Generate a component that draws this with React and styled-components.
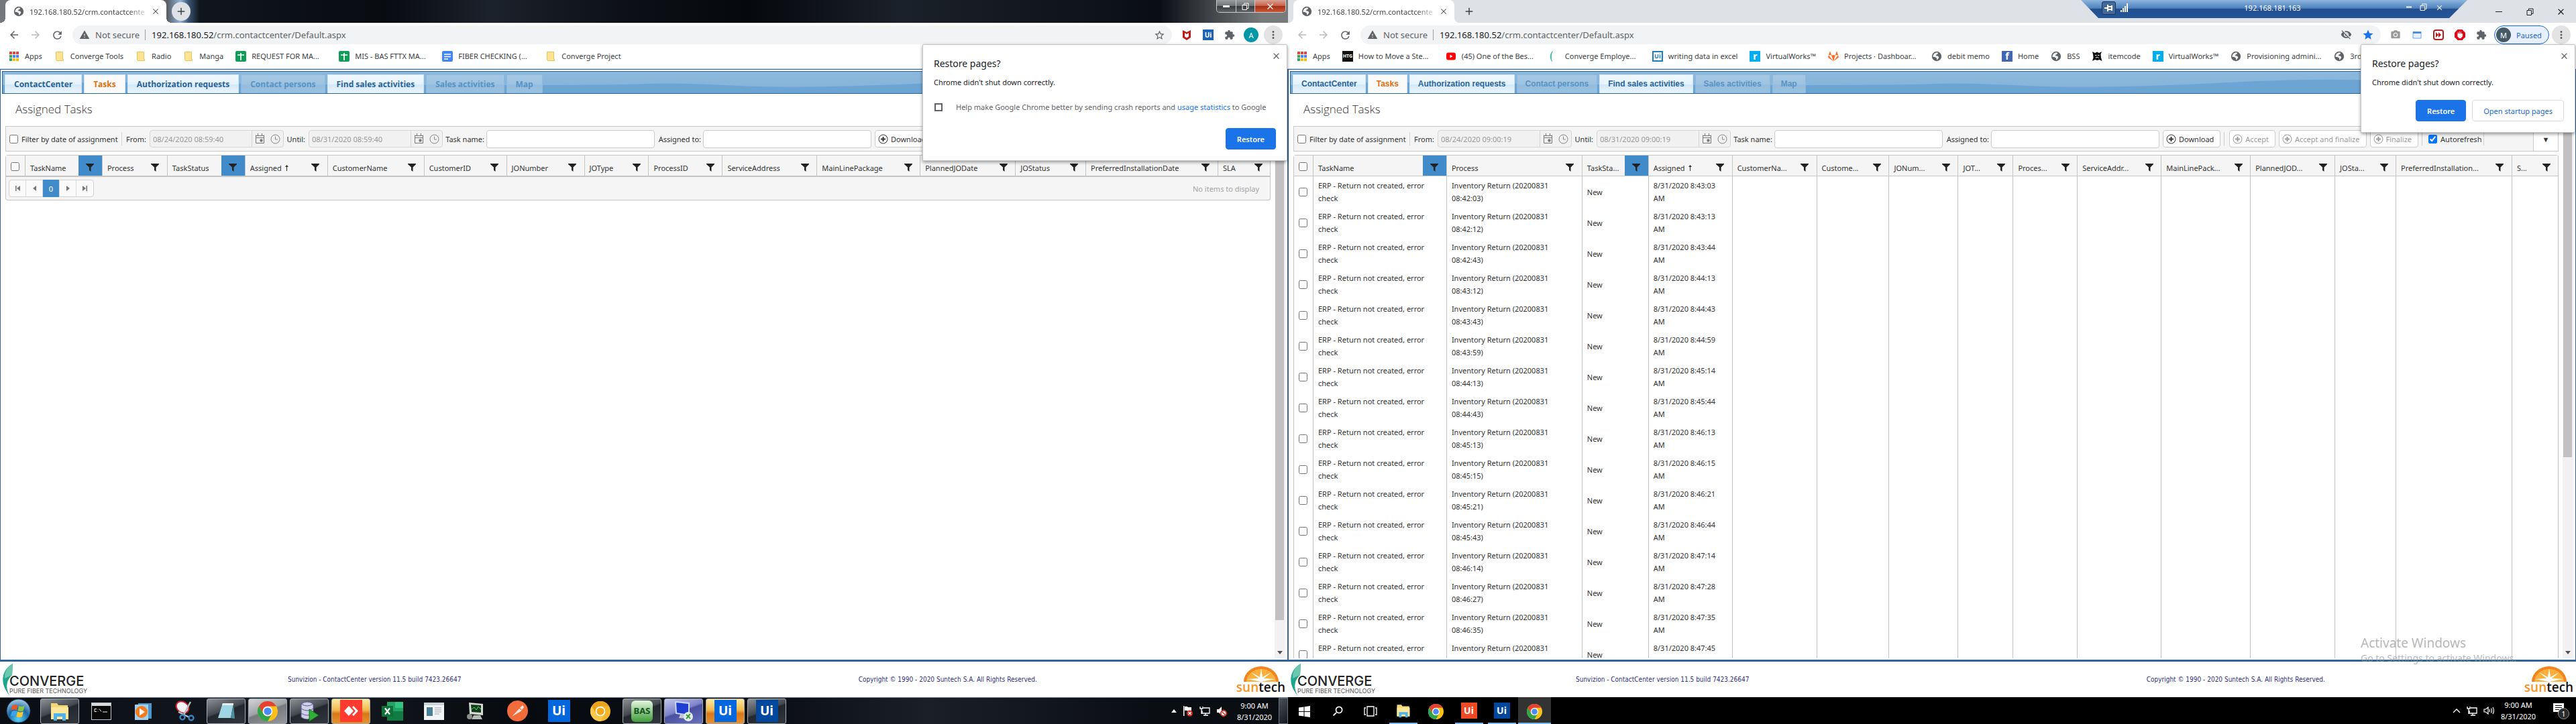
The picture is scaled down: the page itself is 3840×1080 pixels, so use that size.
import React, { useId } from 'react';
import styled, { createGlobalStyle, css } from 'styled-components';
import {
  MdArrowBack, MdArrowForward, MdRefresh, MdWarning, MdStarBorder, MdStar, MdExtension,
  MdMoreVert, MdVisibilityOff, MdClose, MdPhotoCamera, MdAdd, MdSearch,
} from 'react-icons/md';
import { FaGitlab } from 'react-icons/fa';

const UI = `'Noto Sans', 'Open Sans', sans-serif`;

const Global = createGlobalStyle`
  * { box-sizing: border-box; }
  html, body { margin: 0; background: #fff; }
  body { font-family: ${UI}; font-size: 11px; color: #333; }
  button, input { font: inherit; color: inherit; }
  button { border: 0; background: none; padding: 0; }
  input[type='checkbox'] { width: 13px; height: 13px; margin: 0; flex: none; }
  svg { display: block; flex: none; }
`;

/* ---------- desktop ---------- */

const Desktop = styled.div`
  display: flex;
  height: 100vh;
  overflow: hidden;
`;

const Screen = styled.section`
  position: relative;
  flex: 1 1 0;
  min-width: 0;
  display: flex;
  flex-direction: column;
`;

/* ---------- browser chrome ---------- */

const TabStrip = styled.div`
  display: flex;
  align-items: center;
  height: 34px;
  padding-left: 8px;
  background: ${(p) =>
    p.$glass
      ? 'linear-gradient(90deg, #75787c 0, #5c6066 13%, #8fb3dc 14%, #3d5878 14.6%, #10161d 15.5%, #080b10 30%, #1c222c 38%, #0d1117 48%, #05080c 58%, #1b212a 70%, #0a0e14 90%, #777b7c 98%)'
      : '#dee1e6'};
`;

const BrowserTab = styled.div`
  position: relative;
  display: flex;
  align-items: center;
  gap: 8px;
  width: 240px;
  height: 34px;
  padding: 0 8px 0 12px;
  border-radius: 8px 8px 0 0;
  background: #fff;
  color: #45494d;
  &::before, &::after {
    content: '';
    position: absolute;
    bottom: 0;
    width: 8px;
    height: 8px;
  }
  &::before { left: -8px; background: radial-gradient(circle at 0 0, transparent 8px, #fff 8px); }
  &::after { right: -8px; background: radial-gradient(circle at 100% 0, transparent 8px, #fff 8px); }
`;

const TabTitle = styled.span`
  flex: 1;
  white-space: nowrap;
  mask-image: linear-gradient(90deg, #000 86%, rgba(0, 0, 0, 0.2));
`;

const IconButton = styled.button`
  display: flex;
  align-items: center;
  justify-content: center;
  flex: none;
  width: ${(p) => p.$size || 16}px;
  height: ${(p) => p.$size || 16}px;
  border-radius: 50%;
  color: ${(p) => p.$color || '#5f6368'};
  background: ${(p) => p.$bg || 'none'};
`;

const NewTab = styled(IconButton)`
  margin-left: 8px;
`;

const AeroControls = styled.div`
  align-self: flex-start;
  display: flex;
  height: 19px;
  margin: 0 3px 0 auto;
  border: 1px solid #c8cacc;
  border-top: 0;
  border-radius: 0 0 5px 5px;
  overflow: hidden;
`;

const AeroButton = styled.button`
  display: flex;
  align-items: center;
  justify-content: center;
  width: ${(p) => (p.$close ? 46 : 28)}px;
  border-left: ${(p) => (p.$first ? 0 : 1)}px solid #c8cacc;
  background: ${(p) =>
    p.$close
      ? 'linear-gradient(#d9a293, #c4604a 48%, #a82d12 52%, #c9583a)'
      : 'linear-gradient(#9a9c9e, #707375 48%, #393c3f 52%, #606365)'};
`;

const MetroControls = styled.div`
  display: flex;
  margin-left: auto;
`;

const MetroButton = styled.button`
  display: flex;
  align-items: center;
  justify-content: center;
  width: 46px;
  height: 28px;
`;

const RemoteBar = styled.div`
  position: absolute;
  top: 0;
  left: 1182px;
  width: 576px;
  height: 27px;
  display: flex;
  align-items: center;
  padding: 0 31px 4px;
  color: #fff;
  background: linear-gradient(#8db4de, #4d81bd 46%, #234f8f 48%, #24569a);
  clip-path: polygon(0 0, 100% 0, 549px 100%, 26px 100%);
`;

const RemotePin = styled.button`
  display: flex;
  align-items: center;
  justify-content: center;
  width: 21px;
  height: 20px;
  border: 1px solid #1a3459;
  border-radius: 3px;
  background: #43699a;
`;

const RemoteTitle = styled.span`
  flex: 1;
  padding-left: 14px;
  text-align: center;
`;

const RemoteButtons = styled.div`
  display: flex;
  gap: 12px;
  padding-right: 4px;
`;

const AddressRow = styled.div`
  display: flex;
  align-items: center;
  height: 36px;
  padding: 0 8px 0 12px;
`;

const NavButtons = styled.div`
  display: flex;
  gap: 14px;
  width: 96px;
`;

const Omnibox = styled.div`
  flex: 1;
  display: flex;
  align-items: center;
  height: 28px;
  padding: 0 10px;
  border-radius: 14px;
  background: #f1f3f4;
  color: #5f6368;
  font-size: 13px;
`;

const NotSecure = styled.span`
  display: flex;
  align-items: center;
  gap: 8px;
  padding-right: 8px;
  margin-right: 9px;
  line-height: 16px;
  border-right: 1px solid #9aa0a6;
`;

const Url = styled.span`
  flex: 1;
  white-space: nowrap;
  b { font-weight: 400; color: #202124; }
`;

const OmniIcons = styled.span`
  display: flex;
  gap: 15px;
`;

const Extensions = styled.div`
  display: flex;
  align-items: center;
  gap: 16px;
  padding: 0 6px 0 14px;
`;

const Avatar = styled.span`
  display: flex;
  align-items: center;
  justify-content: center;
  width: 22px;
  height: 22px;
  margin: 0 2px 0 -3px;
  border-radius: 50%;
  color: #fff;
  background: ${(p) => p.$bg};
`;

const ProfilePill = styled.button`
  display: flex;
  align-items: center;
  gap: 6px;
  width: 82px;
  height: 28px;
  margin: 0 -2px 0 -5px;
  padding-left: 5px;
  border: 1px solid #1967d2;
  border-radius: 14px;
  background: #e8f0fe;
  color: #1967d2;
`;

const Bookmarks = styled.nav`
  display: flex;
  align-items: center;
  gap: 18px;
  height: 33px;
  padding: 0 0 5px 13px;
  overflow: hidden;
  border-bottom: 1px solid #d4d6d9;
`;

const Bookmark = styled.a`
  display: flex;
  align-items: center;
  gap: 8px;
  flex: none;
  color: #3c4043;
  text-decoration: none;
  white-space: nowrap;
  span { width: ${(p) => (p.$long ? '112px' : 'auto')}; }
`;

/* ---------- restore bubble ---------- */

const Bubble = styled.aside`
  position: absolute;
  top: 66px;
  right: 1px;
  width: ${(p) => p.$width}px;
  padding: 19px 16px 16px 16px;
  background: #fff;
  border: 1px solid #c4c6c8;
  border-radius: 2px;
  box-shadow: 0 2px 5px rgba(0, 0, 0, 0.4);
  color: #202124;
  z-index: 2;
`;

const BubbleClose = styled(IconButton)`
  position: absolute;
  top: 8px;
  right: 8px;
`;

const BubbleTitle = styled.h2`
  margin: 0 0 9px;
  font-size: 14px;
  line-height: 18px;
  font-weight: 400;
`;

const BubbleText = styled.p`
  margin: 0;
  line-height: 20px;
`;

const ReportLabel = styled.label`
  display: flex;
  align-items: center;
  gap: 20px;
  margin-top: 17px;
  line-height: 20px;
  white-space: nowrap;
  color: #5f6368;
  a { color: #1a73e8; text-decoration: none; }
  input[type='checkbox'] {
    appearance: none;
    width: 12px;
    height: 12px;
    margin-left: 1px;
    border: 2px solid #5f6368;
  }
`;

const BubbleButtons = styled.div`
  display: flex;
  justify-content: flex-end;
  gap: 9px;
  margin-top: ${(p) => (p.$tight ? 16 : 21)}px;
`;

const BubbleButton = styled.button`
  height: 32px;
  padding: 0 16px;
  border-radius: 4px;
  border: 1px solid ${(p) => (p.$primary ? '#1a73e8' : '#dadce0')};
  background: ${(p) => (p.$primary ? '#1a73e8' : '#fff')};
  color: ${(p) => (p.$primary ? '#fff' : '#1967d2')};
  font-weight: ${(p) => (p.$primary ? 600 : 400)};
`;

/* ---------- web application ---------- */

const Frame = styled.main`
  flex: 1;
  min-height: 0;
  display: flex;
  flex-direction: column;
  padding: 2px;
  border: 1px solid #2d6699;
  border-bottom-width: 3px;
`;

const AppTabs = styled.nav`
  position: relative;
  display: flex;
  align-items: flex-end;
  gap: 3px;
  height: 34px;
  padding: 4px 3px 0;
  border: 1px solid #2d6699;
  border-right: 0;
  overflow: hidden;
  background: linear-gradient(#8cb8dc, #83b3da);
  flex: none;
`;

const Wave = styled.svg`
  position: absolute;
  inset: 0;
  width: 100%;
  height: 100%;
`;

const tabStates = {
  normal: css`
    background: linear-gradient(#f0f8fe, #e6f3fd 50%, #d2e8fb 52%, #eaf5fe);
    color: #2a6496;
  `,
  active: css`
    background: #fafafa;
    color: #e0700d;
  `,
  disabled: css`
    background: linear-gradient(#a6c8e4, #9dc3e2 50%, #93bcde 52%, #9ac1e1);
    color: #5a93c1;
  `,
};

const AppTab = styled.button`
  position: relative;
  height: 28px;
  padding: ${(p) => (p.$arial ? '0 12px 2px' : '0 13px')};
  border: 1px solid ${(p) => (p.$state === 'disabled' ? '#8fb9dc' : '#cfe4f5')};
  border-bottom: 0;
  font-weight: 700;
  font-size: 12px;
  font-family: ${(p) => (p.$arial ? `'Liberation Sans', Arial, sans-serif` : `'Open Sans', sans-serif`)};
  white-space: nowrap;
  ${(p) => tabStates[p.$state]}
`;

const Body = styled.div`
  flex: 1;
  min-height: 0;
  display: flex;
  gap: 6px;
  padding: 0 1px 0 5px;
  overflow: hidden;
`;

const Main = styled.div`
  flex: 1;
  min-width: 0;
  overflow: hidden;
`;

const Title = styled.h1`
  margin: 0;
  padding-left: 15px;
  height: 48px;
  font-family: 'Open Sans', sans-serif;
  font-size: 17px;
  line-height: 46px;
  font-weight: 300;
`;

const FilterBar = styled.form`
  display: flex;
  align-items: center;
  height: 38px;
  padding-left: 5px;
  margin-bottom: 5px;
  border: 1px solid #c9c9c9;
  background: #f5f5f5;
  white-space: nowrap;
`;

const CheckLabel = styled.label`
  display: flex;
  align-items: center;
  gap: 5px;
  width: ${(p) => p.$width}px;
  height: 20px;
  border-right: 1px solid #d4d4d4;
`;

const FieldLabel = styled.label`
  width: ${(p) => p.$width}px;
  text-align: right;
  margin-right: ${(p) => p.$gap || 5}px;
`;

const DateBox = styled.div`
  display: flex;
  align-items: center;
  width: 200px;
  height: 26px;
  border: 1px solid #d6d6d6;
  border-radius: 4px;
  background: #f1f1f1;
`;

const DateInput = styled.input`
  width: 152px;
  height: 24px;
  padding: 0 4px;
  border: 0;
  border-right: 1px solid #d6d6d6;
  background: none;
  color: #9a9a9a;
`;

const PickerButton = styled.button`
  display: flex;
  justify-content: center;
  width: 23px;
`;

const TextInput = styled.input`
  width: 251px;
  height: 27px;
  padding: 0 5px;
  border: 1px solid #ccc;
  border-radius: 4px;
  background: #fff;
`;

const ToolButton = styled.button`
  display: flex;
  align-items: center;
  gap: 4px;
  height: 26px;
  margin-left: 5px;
  padding: 0 9px 0 4px;
  border: 1px solid #ccc;
  border-radius: 4px;
  background: #fff;
  color: #333;
  &:disabled { color: #9b9b9b; }
`;

const Divider = styled.span`
  width: 1px;
  height: 20px;
  margin: 0 2px 0 5px;
  background: #ccc;
`;

const MoreButton = styled.button`
  width: 37px;
  height: 36px;
  margin-left: auto;
  border-left: 1px solid #ccc;
  background: #fff;
  display: flex;
  align-items: center;
  justify-content: center;
`;

const Grid = styled.table`
  width: 100%;
  table-layout: fixed;
  border-spacing: 0;
  border-left: 1px solid #c5c5c5;
  border-top: 1px solid #c5c5c5;
  border-radius: 4px 4px 0 0;
  line-height: 19px;
`;

const Col = styled.col`
  width: ${(p) => (p.$share / 1886) * 100}%;
`;

const HeadCell = styled.th`
  padding: 0;
  border-right: 1px solid #c5c5c5;
  border-bottom: ${(p) => (p.$thick ? 2 : 1)}px solid #c5c5c5;
  background: #f5f5f5;
  font-weight: 400;
  text-align: left;
`;

const HeadInner = styled.div`
  display: flex;
  align-items: center;
  height: 30px;
  padding-left: 7px;
  white-space: nowrap;
  overflow: hidden;
`;

const HeadLabel = styled.span`
  flex: 1;
  padding-top: 6px;
`;

const FilterButton = styled.button`
  display: flex;
  align-items: center;
  justify-content: center;
  width: 35px;
  height: 30px;
  padding-top: 6px;
  background: ${(p) => (p.$on ? '#428bca' : 'none')};
`;

const Cell = styled.td`
  height: 46px;
  padding: 0 8px 0 7px;
  border-right: 1px solid #c5c5c5;
  vertical-align: middle;
  white-space: nowrap;
`;

const CheckHold = styled.label`
  display: flex;
  padding: ${(p) => (p.$head ? '3px 0 0 7px' : '0')};
`;

const Pager = styled.div`
  display: flex;
  align-items: center;
  height: 35px;
  padding: 0 16px 0 4px;
  border: 1px solid #c5c5c5;
  border-top: 0;
  border-radius: 0 0 4px 4px;
  background: #f5f5f5;
  color: #a3a3a3;
`;

const PagerGroup = styled.div`
  display: flex;
  height: 26px;
  margin-right: auto;
  border: 1px solid #d2d2d2;
  border-radius: 4px;
  background: #fafafa;
`;

const PagerButton = styled.button`
  display: flex;
  align-items: center;
  justify-content: center;
  width: 25px;
  margin: ${(p) => (p.$current ? '-1px 0' : '0')};
  border-right: ${(p) => (p.$last ? 0 : 1)}px solid #dcdcdc;
  background: ${(p) => (p.$current ? '#428bca' : 'none')};
  color: ${(p) => (p.$current ? '#fff' : '#888')};
`;

const Scrollbar = styled.div`
  display: flex;
  flex-direction: column;
  width: 16px;
  padding: 17px 1px;
  background: #f1f1f1;
`;

const Thumb = styled.div`
  flex: 0 0 ${(p) => p.$share}%;
  margin: 0 1px 0 0;
  background: #c1c1c1;
`;

const ScrollArrow = styled.span`
  margin: auto auto -11px;
  border: 4px solid transparent;
  border-top: 5px solid #505050;
  border-bottom: 0;
`;

const Footer = styled.footer`
  display: flex;
  align-items: center;
  height: 53px;
  padding-left: 4px;
  font: 10px 'DejaVu Sans Condensed', 'DejaVu Sans', sans-serif;
  color: #2f2f7d;
  background: #fff;
`;

const FooterText = styled.span`
  flex: 1;
  text-align: center;
`;

const ConvergeLogo = styled.div`
  display: flex;
  width: 127px;
  height: 48px;
`;

const ConvergeWords = styled.div`
  margin-left: -7px;
  padding-top: 16px;
  font-family: Inter, sans-serif;
  white-space: nowrap;
  color: #222;
`;

const ConvergeName = styled.div`
  font-size: 20px;
  line-height: 20px;
  font-weight: 500;
`;

const ConvergeTag = styled.div`
  font-size: 9px;
  line-height: 10px;
  color: #555;
`;

const SuntechLogo = styled.div`
  display: flex;
  flex-direction: column;
  align-items: center;
  width: 80px;
  padding-right: 1px;
`;

const SuntechName = styled.div`
  font: 600 19px/17px 'Open Sans', sans-serif;
  color: #111;
  span { color: #f7941d; }
`;

const Watermark = styled.div`
  position: absolute;
  left: 1599px;
  bottom: 88px;
  color: rgba(150, 150, 150, 0.7);
  font-size: 14px;
  line-height: 20px;
  white-space: nowrap;
  strong { display: block; font-weight: 400; font-size: 19px; line-height: 25px; }
`;

/* ---------- taskbars ---------- */

const AeroBar = styled.div`
  display: flex;
  align-items: center;
  height: 40px;
  padding-left: 9px;
  border-top: 1px solid #6e7a88;
  background: linear-gradient(90deg, #0a0e13, #151a21 25%, #070a0e 40%, #0b0f14 60%, #1a1f28 72%, #0a0d12 90%);
`;

const AeroApps = styled.div`
  display: flex;
  gap: 4px;
  margin-left: 14px;
`;

const aeroLook = {
  none: 'transparent',
  open: 'linear-gradient(160deg, #8d9196, #43484e 45%, #23282e 50%, #32373d)',
  light: 'linear-gradient(160deg, #d2d4d6, #a0a3a6 45%, #77797c 50%, #96989b)',
  alert: 'linear-gradient(#fbe9a0, #f2b94f 45%, #d9761a 60%, #e5922e)',
  blue: 'linear-gradient(160deg, #c4c8ee, #7c82c8 45%, #4a50a0 50%, #6a70c0)',
};

const AeroApp = styled.button`
  display: flex;
  align-items: center;
  justify-content: center;
  width: 58px;
  height: 38px;
  border: 1px solid ${(p) => (p.$look === 'none' ? 'transparent' : '#a6abb0')};
  border-radius: 3px;
  background: ${(p) => aeroLook[p.$look]};
`;

const StartButton = styled.button`
  display: flex;
`;

const Tray = styled.div`
  display: flex;
  align-items: center;
  gap: 9px;
  margin-left: auto;
  color: #fff;
`;

const Clock = styled.div`
  width: 60px;
  margin: 0 ${(p) => p.$after}px 0 ${(p) => p.$before}px;
  text-align: center;
  line-height: 17px;
`;

const ShowDesktop = styled.button`
  width: 14px;
  height: 39px;
  border: 1px solid #6d737a;
  background: linear-gradient(135deg, #4a5057, #15191e);
`;

const MetroBar = styled.div`
  display: flex;
  align-items: center;
  height: 40px;
  background: #000;
`;

const MetroApp = styled.button`
  display: flex;
  align-items: center;
  justify-content: center;
  width: 49px;
  height: 40px;
  padding-top: 2px;
  background: ${(p) => (p.$active ? '#333' : 'none')};
  box-shadow: ${(p) => (p.$active ? 'inset 0 -2px #76b9ed' : 'none')};
  border-bottom: ${(p) => (p.$open ? 2 : 0)}px solid #76b9ed;
  border-image: ${(p) =>
    p.$open ? 'linear-gradient(90deg, #000 5px, #76b9ed 5px, #76b9ed 45px, #000 45px) 1' : 'none'};
`;

/* ---------- drawings ---------- */

const Tile = styled.i`
  display: flex;
  align-items: center;
  justify-content: center;
  flex: none;
  width: ${(p) => p.$w}px;
  height: ${(p) => p.$h}px;
  border: ${(p) => (p.$border ? `2px solid ${p.$border}` : 0)};
  border-radius: ${(p) => p.$r}px;
  background: ${(p) => p.$bg};
  color: ${(p) => p.$fill};
  font-style: normal;
  font-weight: 700;
  font-size: ${(p) => p.$size}px;
  line-height: 1;
`;

const Square = ({ bg, children, w = 16, h = 16, size = 9, fill = '#fff', r = 0, border }) => (
  <Tile $bg={bg} $w={w} $h={h} $size={size} $fill={fill} $r={r} $border={border}>{children}</Tile>
);

const Globe = () => (
  <svg width="16" height="16" viewBox="0 0 16 16">
    <circle cx="8" cy="8" r="7.2" fill="#5f6368" />
    <path d="M4.500 3.800 7.800 2.200l2.500.6-1 2-2 1-.3 1.400 2.600.3 1.700 1.600-.6 2-2.300 2.700-.6-3.200-2.600-1.500-2.700-.2.2-2.400Z" fill="#fff" opacity=".92" />
  </svg>
);

const AppsIcon = () => {
  const colors = ['#ea4335', '#ea4335', '#ea4335', '#34a853', '#4285f4', '#4285f4', '#34a853', '#fbbc05', '#fbbc05'];
  return (
    <svg width="16" height="16" viewBox="0 0 16 16">
      {colors.map((c, i) => (
        <rect key={i} x={1 + (i % 3) * 5} y={1 + Math.floor(i / 3) * 5} width="4" height="4" fill={c} />
      ))}
    </svg>
  );
};

const Folder = () => (
  <svg width="16" height="16" viewBox="0 0 16 16">
    <path d="M2.500 1.500h10v11h1v2H4l-1.500-1z" fill="#ffe391" stroke="#e8c45c" />
  </svg>
);

const Sheet = () => (
  <svg width="16" height="16" viewBox="0 0 16 16">
    <rect width="16" height="16" rx="2" fill="#0f9d58" />
    <path d="M3 6h10M8 3v11" stroke="#fff" strokeWidth="1.7" />
  </svg>
);

const Doc = () => (
  <svg width="16" height="16" viewBox="0 0 16 16">
    <rect width="16" height="16" rx="2" fill="#4285f4" />
    <path d="M3 5h10M3 8.500h10M3 12h6" stroke="#fff" strokeWidth="1.600" />
  </svg>
);

const YouTube = () => (
  <svg width="16" height="16" viewBox="0 0 16 16">
    <rect x="1" y="2.500" width="14" height="11" rx="3" fill="#f00" />
    <path d="m6.500 5.500 4 2.500-4 2.500z" fill="#fff" />
  </svg>
);

const Crescent = () => (
  <svg width="16" height="16" viewBox="0 0 16 16">
    <path d="M5.500.5C1 5 1.500 11 4.500 15.500 3 10 3 5 5.500.5Z" fill="#28b796" stroke="#28b796" strokeWidth=".6" />
  </svg>
);

const Ninja = () => (
  <svg width="16" height="16" viewBox="0 0 16 16">
    <path d="M1 1l4 2 3-1.500L11 3l4-2-1.500 4 .5 5 1.500 5-4-2-3 1-3.500-1L1 15l1.500-5L2 5Z" fill="#111" />
    <path d="M5 6.500h2.500M9 6.500h2.500M6 10.500c1.500-1.500 3-1.500 4.500 0" stroke="#fff" fill="none" />
  </svg>
);

const ChromeLogo = ({ size = 24, canary }) => {
  const [r, g, y, b] = canary ? ['#e9a21b', '#f7c948', '#f3b62c', '#f0a818'] : ['#e34133', '#2da44e', '#fbc116', '#4a8af4'];
  return (
    <svg width={size} height={size} viewBox="0 0 24 24">
      <circle cx="12" cy="12" r="12" fill={y} />
      <path d="M1.600 6A12 12 0 0 1 22.400 6H12a6 6 0 0 0-5.200 9z" fill={r} />
      <path d="M1.600 6A12 12 0 0 0 12 24l5.200-9a6 6 0 0 1-10.400 0z" fill={g} />
      <circle cx="12" cy="12" r="5.800" fill="#fff" />
      <circle cx="12" cy="12" r="4.500" fill={b} />
    </svg>
  );
};

const FilterIcon = () => (
  <svg width="12" height="12" viewBox="0 0 12 12">
    <path d="M0 0h12v1L7.500 5.500V12L5 10V5.500L0 1Z" fill="#222" />
  </svg>
);

const SortArrow = styled.svg`
  display: inline-block;
  margin-left: 5px;
  vertical-align: 0;
`;

const Calendar = () => (
  <svg width="15" height="16" viewBox="0 0 15 16" fill="none" stroke="#777">
    <path d="M1 3.500h13M1 6.500h13M1.500 2.500v12h12v-12M4.500 0v4M10.500 0v4" />
    <path d="M8 9h3v3H8z" fill="#777" />
  </svg>
);

const ClockIcon = () => (
  <svg width="15" height="15" viewBox="0 0 15 15" fill="none" stroke="#888">
    <circle cx="7.500" cy="7.500" r="6.500" />
    <path d="M7.500 3.500v4.500h3.500" />
  </svg>
);

const PlusCircle = () => (
  <svg width="15" height="15" viewBox="0 0 15 15" fill="none" stroke="currentColor">
    <circle cx="7.500" cy="7.500" r="6.500" />
    <path d="M7.500 4v7M4 7.500h7" strokeWidth="2" />
  </svg>
);

const PagerIcon = ({ flip, bar }) => (
  <svg width="9" height="8" viewBox="0 0 9 8" transform={flip ? 'scale(-1 1)' : undefined}>
    <path d={bar ? 'M8 0v8L3 4ZM1 0h1.500v8H1Z' : 'M7 0v8L2 4Z'} fill="#777" />
  </svg>
);

const Puzzle = () => <MdExtension size={16} color="#5f6368" />;

const Shield = () => (
  <svg width="16" height="16" viewBox="0 0 16 16">
    <path d="M2 1l6 3 6-3v11l-6 4-6-4ZM5 5v5.500l3 2 3-2V5L8 7Z" fill="#c01818" fillRule="evenodd" />
  </svg>
);

const WindowExt = () => (
  <svg width="16" height="16" viewBox="0 0 16 16">
    <path d="M2 3.500h12v9.500H2z" fill="#e8f1fd" stroke="#6ba4ee" />
    <path d="M2 3h12v3H2z" fill="#4a90e2" />
  </svg>
);

const FastForward = () => (
  <svg width="16" height="16" viewBox="0 0 16 16">
    <rect x="1" y="1" width="14" height="14" rx="3" fill="#fff" stroke="#b71c1c" strokeWidth="2" />
    <path d="m4 4 4 4-4 4zM8 4l4 4-4 4z" fill="#c01818" />
  </svg>
);

const AdBlock = () => (
  <svg width="16" height="16" viewBox="0 0 17 17">
    <path d="M5 0h7l5 5v7l-5 5H5l-5-5V5z" fill="#e30613" />
    <path d="M5.500 7V4.500M7.700 7V3M9.900 7V3.500M5.200 7h7v3.500L10 13.500H7.500L5.200 11Z" fill="#fff" stroke="#fff" />
  </svg>
);

const RestoreGlyph = ({ color = '#222' }) => (
  <svg width="11" height="11" viewBox="0 0 11 11" fill="none" stroke={color}>
    <path d="M1 3.500h6.500v7H1zM3.500 3V1H10v7.500H8" />
  </svg>
);

const Dash = ({ color = '#222', w = 10, t = 1 }) => (
  <svg width={w} height="10" viewBox={`0 0 ${w} 10`}>
    <path d={`M0 5.500h${w}`} stroke={color} strokeWidth={t} />
  </svg>
);

const Orb = () => (
  <svg width="37" height="37" viewBox="0 0 37 37">
    <defs>
      <radialGradient id="orb" cx="50%" cy="85%" r="80%">
        <stop offset="0" stopColor="#5cd0f5" /><stop offset=".55" stopColor="#1b68a8" /><stop offset="1" stopColor="#9cc3de" />
      </radialGradient>
    </defs>
    <circle cx="18.500" cy="18.500" r="17.500" fill="url(#orb)" stroke="#1a3b5c" />
    <path d="M9 11q4-3 8.500-.8l-1.600 7.300q-4-2-8.200.4z" fill="#e8562a" />
    <path d="M19 11q4 2 8.600-.3L26 18q-4.500 2.200-8.600 0z" fill="#8cc63f" />
    <path d="M8.500 19.500q4-2.500 8.200-.4L15 26.500q-4-2-8.200.4z" fill="#3ba5e8" />
    <path d="M17 19.600q4 2.200 8.700 0L24 27q-4.500 2.200-8.600 0z" fill="#fcc92c" />
  </svg>
);

const Explorer = ({ size = 30 }) => (
  <svg width={size} height={size} viewBox="0 0 30 30">
    <path d="M2 3h9l2 3h14v20H2z" fill="#f3d677" />
    <path d="M2 9h26v18H2z" fill="#fbe69c" />
    <path d="M6 29V18h18v11h-5v-6h-8v6z" fill="#4fb3e8" />
  </svg>
);

const Cmd = () => (
  <svg width="30" height="26" viewBox="0 0 30 26">
    <rect x=".5" y=".5" width="29" height="25" fill="#0a0a0a" stroke="#bfc3c7" />
    <path d="M1 1h28v4H1z" fill="#d8dbde" />
    <path d="M8 9.500H5v4h3M10 10v.5M10 13v.5M12 9.500l3 4M17 14h7" stroke="#eee" fill="none" />
  </svg>
);

const Player = () => (
  <svg width="28" height="28" viewBox="0 0 28 28">
    <path d="M7 2h20v23H7z" fill="#4d94c8" /><path d="M2 4h20v23H2z" fill="#9ed0ef" />
    <circle cx="12" cy="15" r="9" fill="#f37b1d" /><path d="M9 9.500 17 15l-8 5.500z" fill="#fff" />
  </svg>
);

const Snip = () => (
  <svg width="30" height="32" viewBox="0 0 30 32">
    <ellipse cx="12" cy="10" rx="10" ry="8" fill="#f5f5f5" stroke="#c9202b" strokeWidth="2" transform="rotate(35 12 10)" />
    <path d="M24 2 14 21M6 17l16 8" stroke="#b9bec4" strokeWidth="2.500" />
    <circle cx="12" cy="25" r="3.500" fill="none" stroke="#3c7fc0" strokeWidth="2.500" />
    <circle cx="25" cy="26" r="3.500" fill="none" stroke="#3c7fc0" strokeWidth="2.500" />
  </svg>
);

const Notepad = () => (
  <svg width="30" height="30" viewBox="0 0 30 30">
    <path d="M10 3h16l-4 22H3z" fill="#9fd6e4" /><path d="M10 3h16v3H9z" fill="#e7eef1" /><path d="m22 25 4-19 2 20z" fill="#4f8fa4" />
  </svg>
);

const Database = () => (
  <svg width="30" height="32" viewBox="0 0 30 32">
    <path d="M3 5q9-6 18 0v20q-9 6-18 0z" fill="#cfcfe8" stroke="#5a5a92" />
    <path d="M3 5q9 6 18 0M3 12q9 6 18 0M3 19q9 6 18 0" fill="none" stroke="#5a5a92" />
    <path d="m15 13 14 9-14 9z" fill="#2eb135" stroke="#176b1c" />
  </svg>
);

const AnyDesk = () => (
  <svg width="33" height="33" viewBox="0 0 33 33">
    <path d="M0 0h33v33H0z" fill="#ff3b30" /><path d="m13 9 7 7.500-7 7.500-7-7.500zM20 9l7 7.500-7 7.500-2-2 5-5.500-5-5.500z" fill="#fff" />
  </svg>
);

const Excel = () => (
  <svg width="32" height="28" viewBox="0 0 32 28">
    <path d="M8 0h24v28H8z" fill="#21a366" /><path d="M20 0h12v9H20z" fill="#33c481" /><path d="M8 14h24v14H8z" fill="#107c41" />
    <path d="M0 6h17v16H0z" fill="#0f7038" /><path d="m5 9.500 7 9M12 9.500l-7 9" stroke="#fff" strokeWidth="2.200" />
  </svg>
);

const FormWindow = () => (
  <svg width="30" height="26" viewBox="0 0 30 26">
    <path d="M0 0h30v26H0z" fill="#f2f4f5" /><path d="M0 0h30v4H0z" fill="#c9d3da" /><path d="M4 7h9v13H4z" fill="#4a7f98" />
    <path d="M16 8h10M16 11h10M16 14h10M16 17h7" stroke="#9aa7ae" />
  </svg>
);

const Monitor = () => (
  <svg width="30" height="30" viewBox="0 0 30 30">
    <path d="M5 2 26 4v17L6 19z" fill="#d5d9d2" /><path d="M8 5l15 1v11L9 16z" fill="#123b1b" />
    <path d="M9 12l4-3 3 4 3-5 4 4" stroke="#49d85f" fill="none" /><path d="M12 21h10l3 6H9z" fill="#b7bbb5" /><circle cx="6" cy="23" r="4" fill="#8b918a" />
  </svg>
);

const Postman = () => (
  <svg width="33" height="33" viewBox="0 0 33 33">
    <circle cx="16.500" cy="16.500" r="15.500" fill="#f26b3a" /><path d="m8 25 11-12 4 3zM20 12l4-4 2 3-3 4z" fill="#fff" opacity=".85" />
  </svg>
);

const RemoteDesktop = () => (
  <svg width="32" height="32" viewBox="0 0 32 32">
    <path d="M4 2 24 4v18L5 19z" fill="#1f3fd0" stroke="#cdd6ee" strokeWidth="2" /><path d="M11 21l8 1 2 5-12-1z" fill="#c7cbd4" />
    <circle cx="23" cy="24" r="7" fill="#e6eae6" /><path d="m20 21 3 3-3 3M26 20l-3 3 3 4" stroke="#2e9b39" fill="none" strokeWidth="1.800" />
  </svg>
);

const FlagTray = () => (
  <svg width="16" height="17" viewBox="0 0 16 17">
    <path d="M1 1h1.500v15H1zM3 2q4-1 5 1h5v6H8q-2-2-5-1z" fill="#fff" /><circle cx="10.500" cy="12" r="4.500" fill="#d52b1e" />
    <path d="m8.500 10 4 4M12.500 10l-4 4" stroke="#fff" strokeWidth="1.400" />
  </svg>
);

const NetTray = () => (
  <svg width="16" height="15" viewBox="0 0 16 15" fill="none" stroke="#fff" strokeWidth="1.300">
    <path d="M6 3h9v8H4V7M9 11v3M6 14h7M1 1v3h4V1M3 4v8" />
  </svg>
);

const MutedTray = () => (
  <svg width="16" height="16" viewBox="0 0 16 16">
    <path d="M1 5h3l4-4v13l-4-4H1z" fill="#fff" /><circle cx="11" cy="11" r="4.200" fill="#fff" stroke="#d52b1e" strokeWidth="1.800" /><path d="m8.500 8.500 5 5" stroke="#d52b1e" strokeWidth="1.500" />
  </svg>
);

const SoundTray = () => (
  <svg width="17" height="14" viewBox="0 0 17 14" fill="none" stroke="#fff" strokeWidth="1.200">
    <path d="M1 5h2.500L7 2v10L3.500 9H1zM9 5q1 2 0 4M11.500 3.500q2 3.500 0 7M14 2q3 5 0 10" />
  </svg>
);

const Notice = () => (
  <svg width="26" height="27" viewBox="0 0 26 27">
    <path d="M1 2h16v13h-5l-4 4v-4H1z" fill="#fff" /><path d="M4 5.500h10M4 8.500h10M4 11.500h6" stroke="#000" />
    <circle cx="16.500" cy="17.500" r="8" fill="#2b2b2b" stroke="#8a8a8a" /><text x="16.500" y="21.500" textAnchor="middle" fill="#fff" fontSize="11">1</text>
  </svg>
);

const Sun = () => (
  <svg width="52" height="23" viewBox="0 0 52 23">
    <path d="M0 23a26 23 0 0 1 52 0z" fill="#f58220" />
    <path d="M4 23a22 19 0 0 1 44 0z" fill="#fbb03b" />
    <path d="M26 23 5 19l17-1L11 9l13 7 2-13 2 13 13-7-11 9 17 1z" fill="#fff" />
  </svg>
);

const Leaf = () => (
  <svg width="17" height="48" viewBox="0 0 17 48">
    <path d="M15 0C-2 9-5 30 10 47 4 36 5 25 14 17Z" fill="#1fa58a" />
    <path d="M15 0C6 5 2 13 3 22l11-5Z" fill="#6cc7b1" />
  </svg>
);

/* ---------- composite parts ---------- */

const bookmarksLeft = [
  ['Apps', <AppsIcon />], ['Converge Tools', <Folder />], ['Radio', <Folder />], ['Manga', <Folder />],
  ['REQUEST FOR MA...', <Sheet />, true], ['MIS - BAS FTTX MA...', <Sheet />, true],
  ['FIBER CHECKING (...', <Doc />, true], ['Converge Project', <Folder />],
];

const bookmarksRight = [
  ['Apps', <AppsIcon />], ['How to Move a Ste...', <Square bg="#111" size={7}>HTG</Square>, true],
  ['(45) One of the Bes...', <YouTube />, true], ['Converge Employe...', <Crescent />, true],
  ['writing data in excel', <Square bg="#fff" fill="#1b7fc4" border="#1b7fc4">Ui</Square>],
  ['VirtualWorks™', <Square bg="#00aeef" size={14}>r</Square>],
  ['Projects · Dashboar...', <FaGitlab size={16} color="#fc6d26" />, true], ['debit memo', <Globe />],
  ['Home', <Square bg="#4267b2" size={14}>f</Square>], ['BSS', <Globe />], ['itemcode', <Ninja />],
  ['VirtualWorks™', <Square bg="#00aeef" size={14}>r</Square>],
  ['Provisioning admini...', <Globe />, true], ['3rd Party', <Globe />],
];

const appTabs = [
  ['ContactCenter', 'normal'], ['Tasks', 'active'], ['Authorization requests', 'normal'],
  ['Contact persons', 'disabled'], ['Find sales activities', 'normal'],
  ['Sales activities', 'disabled'], ['Map', 'disabled'],
];

const columnsLeft = [
  ['TaskName', 115, true], ['Process', 97], ['TaskStatus', 116, true], ['Assigned', 123, false, true],
  ['CustomerName', 144], ['CustomerID', 123], ['JONumber', 116], ['JOType', 96], ['ProcessID', 110],
  ['ServiceAddress', 141], ['MainLinePackage', 154], ['PlannedJODate', 142], ['JOStatus', 105],
  ['PreferredInstallationDate', 197], ['SLA', 78],
];

const columnsRight = [
  ['TaskName', 199, true], ['Process', 202], ['TaskSta...', 99, true], ['Assigned', 125, false, true],
  ['CustomerNa...', 126], ['Custome...', 108], ['JONum...', 103], ['JOT...', 82], ['Proces...', 96],
  ['ServiceAddr...', 125], ['MainLinePack...', 133], ['PlannedJOD...', 126], ['JOSta...', 91],
  ['PreferredInstallation...', 173], ['S...', 69],
];

const tasks = [
  ['08:42:03', '8:43:03'], ['08:42:12', '8:43:13'], ['08:42:43', '8:43:44'], ['08:43:12', '8:44:13'],
  ['08:43:43', '8:44:43'], ['08:43:59', '8:44:59'], ['08:44:13', '8:45:14'], ['08:44:43', '8:45:44'],
  ['08:45:13', '8:46:13'], ['08:45:15', '8:46:15'], ['08:45:21', '8:46:21'], ['08:45:43', '8:46:44'],
  ['08:46:14', '8:47:14'], ['08:46:27', '8:47:28'], ['08:46:35', '8:47:35'], ['08:46:44', '8:47:45'],
];

const BrowserTop = ({ glass, backColor, omniIcons, extensions, bookmarks, controls }) => (
  <>
    <TabStrip $glass={glass}>
      <BrowserTab>
        <Globe />
        <TabTitle>192.168.180.52/crm.contactcente</TabTitle>
        <IconButton aria-label="Close tab"><MdClose size={14} /></IconButton>
      </BrowserTab>
      <NewTab $size={28} $bg={glass ? '#dee1e6' : 'none'} $color="#3c4043" aria-label="New tab"><MdAdd size={18} /></NewTab>
      {controls}
    </TabStrip>
    <AddressRow>
      <NavButtons>
        <IconButton $size={18} $color={backColor} aria-label="Back"><MdArrowBack size={18} /></IconButton>
        <IconButton $size={18} $color="#b9bbbe" aria-label="Forward"><MdArrowForward size={18} /></IconButton>
        <IconButton $size={18} aria-label="Reload"><MdRefresh size={19} /></IconButton>
      </NavButtons>
      <Omnibox>
        <NotSecure><MdWarning size={16} />Not secure</NotSecure>
        <Url><b>192.168.180.52</b>/crm.contactcenter/Default.aspx</Url>
        <OmniIcons>{omniIcons}</OmniIcons>
      </Omnibox>
      <Extensions>{extensions}</Extensions>
      <IconButton $size={28} $bg="#e3e3e4" aria-label="Menu"><MdMoreVert size={18} /></IconButton>
    </AddressRow>
    <Bookmarks>
      {bookmarks.map(([label, icon, long], i) => (
        <Bookmark key={i} href="#" $long={long}>{icon}<span>{label}</span></Bookmark>
      ))}
    </Bookmarks>
  </>
);

const DateField = ({ label, value, width }) => {
  const id = useId();
  return (
    <>
      <FieldLabel htmlFor={id} $width={width}>{label}</FieldLabel>
      <DateBox>
        <DateInput id={id} defaultValue={value} disabled />
        <PickerButton type="button" aria-label="Pick a date"><Calendar /></PickerButton>
        <PickerButton type="button" aria-label="Pick a time"><ClockIcon /></PickerButton>
      </DateBox>
    </>
  );
};

const TextField = ({ label, width }) => {
  const id = useId();
  return (
    <>
      <FieldLabel htmlFor={id} $width={width} $gap={3}>{label}</FieldLabel>
      <TextInput id={id} />
    </>
  );
};

const ToolCheck = styled(CheckLabel)`
  margin-left: 7px;
`;

const ContactCenter = ({ arial, time, columns, rows, thumb }) => (
  <>
    <Frame>
      <AppTabs>
        <Wave viewBox="0 0 1914 32" preserveAspectRatio="none">
          <path d="M0 20Q120 14 300 17T700 20 960 18 1100 21 1400 16 1700 20 1914 17V32H0Z" fill="#6ca5d4" />
        </Wave>
        {appTabs.map(([label, state]) => (
          <AppTab key={label} $state={state} $arial={arial} disabled={state === 'disabled'}>{label}</AppTab>
        ))}
      </AppTabs>
      <Body>
        <Main>
          <Title>Assigned Tasks</Title>
          <FilterBar>
            <CheckLabel $width={168}><input type="checkbox" />Filter by date of assignment</CheckLabel>
            <DateField label="From:" width={36} value={`08/24/2020 ${time}`} />
            <DateField label="Until:" width={32} value={`08/31/2020 ${time}`} />
            <TextField label="Task name:" width={62} />
            <TextField label="Assigned to:" width={69} />
            <ToolButton type="button"><PlusCircle />Download</ToolButton>
            <Divider />
            <ToolButton type="button" disabled><PlusCircle />Accept</ToolButton>
            <ToolButton type="button" disabled><PlusCircle />Accept and finalize</ToolButton>
            <ToolButton type="button" disabled><PlusCircle />Finalize</ToolButton>
            <Divider />
            <ToolCheck $width={83}><input type="checkbox" defaultChecked />Autorefresh</ToolCheck>
            <MoreButton type="button" aria-label="More actions">▼</MoreButton>
          </FilterBar>
          <Grid>
            <colgroup>
              <Col $share={29} />
              {columns.map(([label, share]) => <Col key={label} $share={share} />)}
            </colgroup>
            <thead>
              <tr>
                <HeadCell $thick={!rows.length}>
                  <CheckHold $head><input type="checkbox" aria-label="Select all" /></CheckHold>
                </HeadCell>
                {columns.map(([label, , on, sorted]) => (
                  <HeadCell key={label} $thick={!rows.length}>
                    <HeadInner>
                      <HeadLabel>
                        {label}
                        {sorted && (
                          <SortArrow width="5" height="9" viewBox="0 0 5 9">
                            <path d="M2.500 0 5 3H3v6H2V3H0Z" fill="#333" />
                          </SortArrow>
                        )}
                      </HeadLabel>
                      <FilterButton $on={on} aria-label={`Filter ${label}`}><FilterIcon /></FilterButton>
                    </HeadInner>
                  </HeadCell>
                ))}
              </tr>
            </thead>
            <tbody>
              {rows.map(([created, assigned]) => (
                <tr key={assigned}>
                  <Cell><CheckHold><input type="checkbox" aria-label={`Select ${assigned}`} /></CheckHold></Cell>
                  <Cell>ERP - Return not created, error<br />check</Cell>
                  <Cell>Inventory Return (20200831<br />{created})</Cell>
                  <Cell>New</Cell>
                  <Cell>8/31/2020 {assigned}<br />AM</Cell>
                  {columns.slice(4).map(([label]) => <Cell key={label} />)}
                </tr>
              ))}
            </tbody>
          </Grid>
          {rows.length === 0 && (
            <Pager>
              <PagerGroup>
                <PagerButton aria-label="First page"><PagerIcon bar /></PagerButton>
                <PagerButton aria-label="Previous page"><PagerIcon /></PagerButton>
                <PagerButton $current>0</PagerButton>
                <PagerButton aria-label="Next page"><PagerIcon flip /></PagerButton>
                <PagerButton $last aria-label="Last page"><PagerIcon bar flip /></PagerButton>
              </PagerGroup>
              No items to display
            </Pager>
          )}
        </Main>
        <Scrollbar><Thumb $share={thumb} /><ScrollArrow /></Scrollbar>
      </Body>
    </Frame>
    <Footer>
      <ConvergeLogo>
        <Leaf />
        <ConvergeWords>
          <ConvergeName>CONVERGE</ConvergeName>
          <ConvergeTag>PURE FIBER TECHNOLOGY</ConvergeTag>
        </ConvergeWords>
      </ConvergeLogo>
      <FooterText>Sunvizion - ContactCenter version 11.5 build 7423.26647</FooterText>
      <FooterText>Copyright © 1990 - 2020 Suntech S.A. All Rights Reserved.</FooterText>
      <SuntechLogo>
        <Sun />
        <SuntechName><span>sun</span>tech</SuntechName>
      </SuntechLogo>
    </Footer>
  </>
);

const uiTile = (bg, w = 33, size = 19) => <Square bg={bg} w={w} h={w} size={size}>Ui</Square>;

const aeroApps = [
  ['Explorer', <Explorer />, 'open'], ['Command Prompt', <Cmd />, 'none'], ['Media Player', <Player />, 'none'],
  ['Snipping Tool', <Snip />, 'none'], ['Notepad', <Notepad />, 'open'], ['Chrome', <ChromeLogo size={30} />, 'light'],
  ['Database', <Database />, 'open'], ['AnyDesk', <AnyDesk />, 'alert'], ['Excel', <Excel />, 'none'],
  ['Forms', <FormWindow />, 'none'], ['Terminal', <Monitor />, 'none'], ['Postman', <Postman />, 'none'],
  ['UiPath', uiTile('#0067df'), 'none'], ['Chrome Canary', <ChromeLogo size={30} canary />, 'none'],
  ['BAS', <Square bg="linear-gradient(#e4f7df, #3f9b3a)" w={32} h={32} r={6} size={13} fill="#12551a">BAS</Square>, 'open'],
  ['Remote Desktop', <RemoteDesktop />, 'blue'], ['UiPath Studio', uiTile('#0067df'), 'alert'],
  ['UiPath Assistant', uiTile('#00489d'), 'open'],
];

const metroApps = [
  ['Start', <svg width="17" height="17" viewBox="0 0 17 17"><path d="M0 2.500 7.500 1.500v6.500H0zM8.500 1.300 17 0v8H8.500zM0 9h7.500v6.500L0 14.500zM8.500 9H17v8l-8.500-1.300z" fill="#fff" /></svg>],
  ['Search', <MdSearch size={20} color="#fff" transform="scale(-1 1)" />],
  ['Task View', <svg width="20" height="16" viewBox="0 0 20 16" fill="none" stroke="#fff" strokeWidth="1.300"><path d="M5 1h10v14H5zM3 3H1v10h2M17 3h2v10h-2" /></svg>],
  ['Explorer', <Explorer size={22} />, true], ['Chrome', <ChromeLogo size={23} />],
  ['UiPath Robot', uiTile('#f04923', 24, 14), true], ['UiPath', uiTile('#00489d', 24, 14), true],
  ['Chrome window', <ChromeLogo size={23} />, false, true],
];

export default function App() {
  return (
    <Desktop>
      <Global />
      <Screen>
        <BrowserTop
          glass
          backColor="#5f6368"
          bookmarks={bookmarksLeft}
          omniIcons={<MdStarBorder size={17} />}
          extensions={
            <>
              <Shield />
              <Square bg="#1c63b7" size={10}>Ui</Square>
              <Puzzle />
              <Avatar $bg="#0097a7">A</Avatar>
            </>
          }
          controls={
            <AeroControls>
              <AeroButton $first aria-label="Minimize"><Dash color="#fff" t={3} /></AeroButton>
              <AeroButton aria-label="Restore down"><RestoreGlyph color="#fff" /></AeroButton>
              <AeroButton $close aria-label="Close"><MdClose size={15} color="#fff" /></AeroButton>
            </AeroControls>
          }
        />
        <ContactCenter time="08:59:40" columns={columnsLeft} rows={[]} thumb={95} />
        <AeroBar>
          <StartButton aria-label="Start"><Orb /></StartButton>
          <AeroApps>
            {aeroApps.map(([name, icon, look]) => (
              <AeroApp key={name} $look={look} aria-label={name}>{icon}</AeroApp>
            ))}
          </AeroApps>
          <Tray>
            <svg width="8" height="5" viewBox="0 0 8 5"><path d="M0 5 4 0l4 5z" fill="#fff" /></svg>
            <FlagTray /><NetTray /><MutedTray />
            <Clock $before={2} $after={-3}>9:00 AM<br />8/31/2020</Clock>
            <ShowDesktop aria-label="Show desktop" />
          </Tray>
        </AeroBar>
        <Bubble $width={544}>
          <BubbleClose aria-label="Dismiss"><MdClose size={15} /></BubbleClose>
          <BubbleTitle>Restore pages?</BubbleTitle>
          <BubbleText>Chrome didn't shut down correctly.</BubbleText>
          <ReportLabel>
            <input type="checkbox" />
            <span>Help make Google Chrome better by sending crash reports and <a href="#">usage statistics</a> to Google</span>
          </ReportLabel>
          <BubbleButtons><BubbleButton $primary>Restore</BubbleButton></BubbleButtons>
        </Bubble>
      </Screen>
      <Screen>
        <BrowserTop
          backColor="#b9bbbe"
          bookmarks={bookmarksRight}
          omniIcons={<><MdVisibilityOff size={17} /><MdStar size={18} color="#1a73e8" /></>}
          extensions={
            <>
              <MdPhotoCamera size={16} color="#9a9a9a" /><WindowExt /><FastForward /><AdBlock /><Puzzle />
              <ProfilePill><Avatar $bg="#455a64">M</Avatar>Paused</ProfilePill>
            </>
          }
          controls={
            <MetroControls>
              <MetroButton aria-label="Minimize"><Dash /></MetroButton>
              <MetroButton aria-label="Restore down"><RestoreGlyph /></MetroButton>
              <MetroButton aria-label="Close"><MdClose size={15} color="#222" /></MetroButton>
            </MetroControls>
          }
        />
        <ContactCenter arial time="09:00:19" columns={columnsRight} rows={tasks} thumb={65} />
        <MetroBar>
          {metroApps.map(([name, icon, open, active]) => (
            <MetroApp key={name} $open={open} $active={active} aria-label={name}>{icon}</MetroApp>
          ))}
          <Tray>
            <svg width="12" height="8" viewBox="0 0 12 8" fill="none" stroke="#fff" strokeWidth="1.400"><path d="M1 7l5-5 5 5" /></svg>
            <NetTray /><SoundTray />
            <Clock $before={-4} $after={12}>9:00 AM<br />8/31/2020</Clock>
            <Notice />
            <span />
          </Tray>
        </MetroBar>
        <RemoteBar>
          <RemotePin aria-label="Pin"><svg width="13" height="10" viewBox="0 0 13 10"><path d="M0 5h5M5 0v10M5 3h6M5 7h6M11 1v8" stroke="#fff" strokeWidth="2" /></svg></RemotePin>
          <svg width="20" height="13" viewBox="0 0 20 13"><path d="M8 13v-3M11 13V7M14 13V4M17 13V0" stroke="#fff" strokeWidth="2" /></svg>
          <RemoteTitle>192.168.181.163</RemoteTitle>
          <RemoteButtons>
            <Dash color="#fff" w={8} t={2} /><RestoreGlyph color="#fff" /><MdClose size={13} color="#fff" />
          </RemoteButtons>
        </RemoteBar>
        <Bubble $width={320}>
          <BubbleClose aria-label="Dismiss"><MdClose size={15} /></BubbleClose>
          <BubbleTitle>Restore pages?</BubbleTitle>
          <BubbleText>Chrome didn't shut down correctly.</BubbleText>
          <BubbleButtons $tight>
            <BubbleButton $primary>Restore</BubbleButton>
            <BubbleButton>Open startup pages</BubbleButton>
          </BubbleButtons>
        </Bubble>
        <Watermark><strong>Activate Windows</strong>Go to Settings to activate Windows.</Watermark>
      </Screen>
    </Desktop>
  );
}
